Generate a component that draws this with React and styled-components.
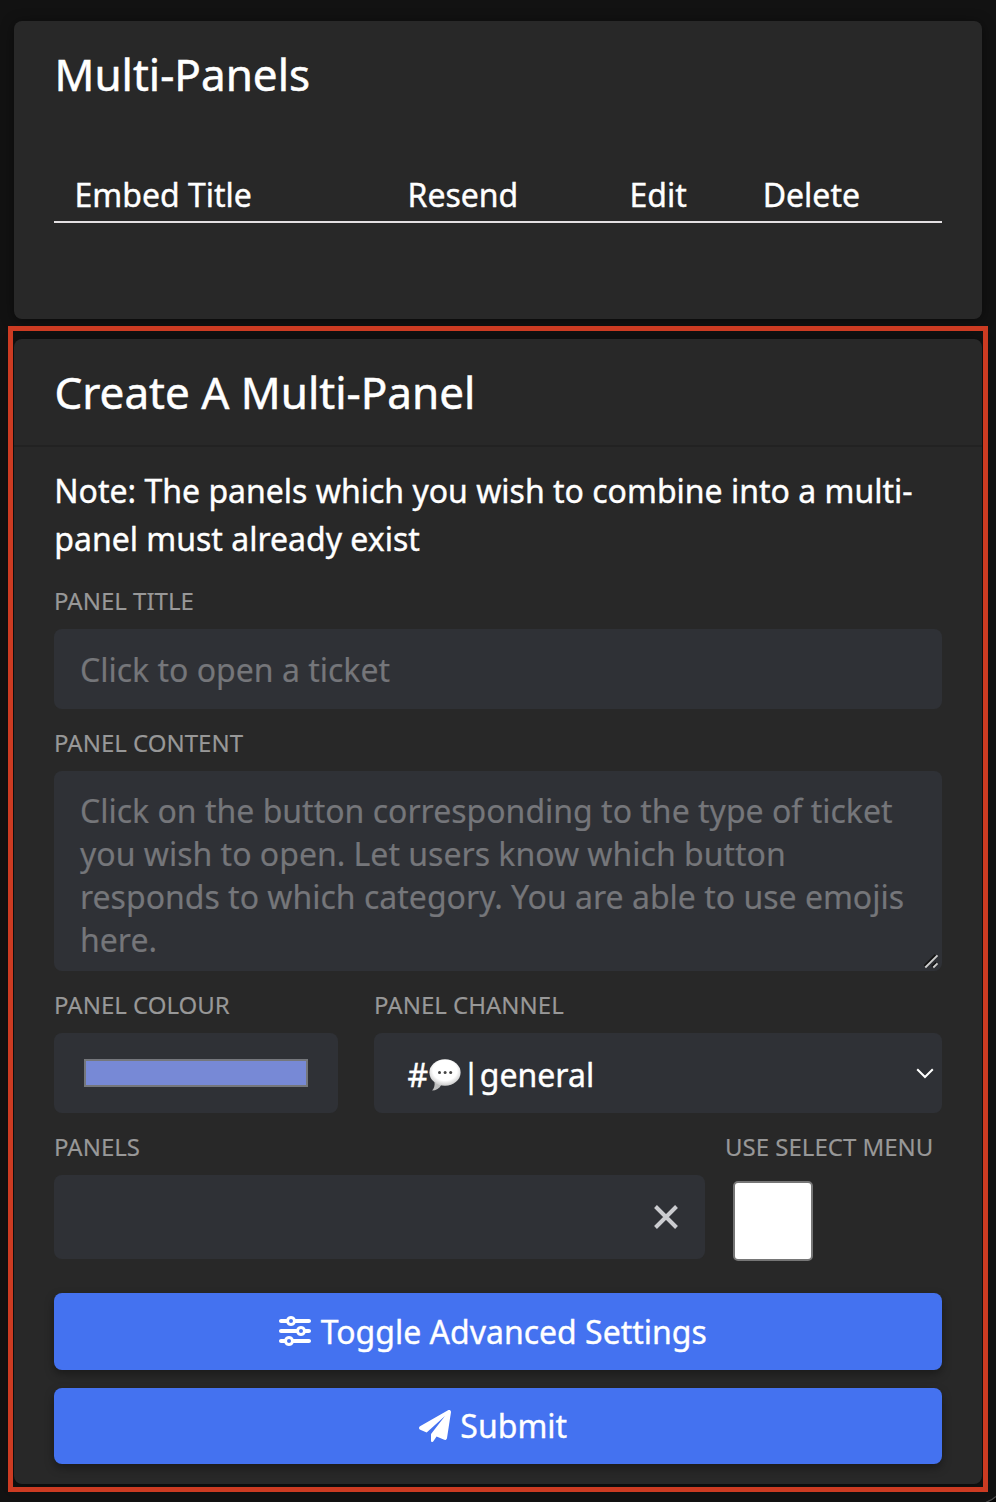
import React from "react";
import styled, { createGlobalStyle } from "styled-components";
import { FaSliders } from "react-icons/fa6";

const GlobalStyle = createGlobalStyle`
  *, *::before, *::after { box-sizing: border-box; }
  html, body { margin: 0; padding: 0; background: #121212; }
  body {
    font-family: "Noto Sans", "Open Sans", sans-serif;
    font-size: 32px;
    color: #fff;
    overflow: hidden;
  }
`;

const Page = styled.main`
  position: relative;
  isolation: isolate;
  width: 996px;
  height: 1502px;
  padding: 21px 8px 10px;
  display: flex;
  flex-direction: column;
  gap: 7px;
  overflow: hidden;
`;

const WindowCorner = styled.svg`
  position: absolute;
  right: 0;
  bottom: 0;
`;

const Card = styled.section`
  position: relative;
  z-index: -1;
  display: flex;
  flex-direction: column;
  background: #282828;
  border-radius: 8px;
  box-shadow: 0 2px 14px rgba(0, 0, 0, 0.45);
`;

const ListCard = styled(Card)`
  height: 298px;
  margin: 0 6px;
`;

const FormCard = styled(Card)`
  height: 1145px;
`;

const Highlight = styled.div`
  border: 5px solid #cc3b22;
  padding: 8px 1px 3px;
`;

const CardHeader = styled.header`
  height: 108px;
  flex: none;
  display: flex;
  align-items: center;
  padding: 0 40px 0 40.5px;
  border-bottom: 2px solid ${(p) => (p.$divided ? "#222222" : "transparent")};
`;

const CardTitle = styled.h4`
  margin: 0;
  font-size: 44px;
  line-height: 60px;
  font-weight: 400;
  -webkit-text-stroke: 0.5px currentColor;
`;

const TableHead = styled.div`
  display: grid;
  grid-template-columns: 37.5% 25% 15% 22.5%;
  margin: 41px 40px 0;
  height: 53px;
  border-bottom: 2px solid #e4e0e2;
`;

const HeadCell = styled.div`
  padding-left: 20.5px;
  line-height: 49px;
  -webkit-text-stroke: 0.4px currentColor;
`;

const Form = styled.form`
  display: flex;
  flex-direction: column;
  padding: 20px 40px 0;
`;

const Note = styled.p`
  margin: 0 0 4px;
  padding-left: 0.3px;
  line-height: 48px;
  -webkit-text-stroke: 0.4px currentColor;
`;

const Row = styled.div`
  display: flex;
  gap: ${(p) => p.$gap}px;
`;

const Field = styled.div`
  display: flex;
  flex-direction: column;
  width: ${(p) => (p.$width ? `${p.$width}px` : "100%")};
  flex: none;
`;

const Label = styled.label`
  height: 62px;
  padding-top: 16px;
  font-size: 24px;
  line-height: 36px;
  color: #989898;
  text-transform: uppercase;
  white-space: nowrap;
  -webkit-text-stroke: 0.15px currentColor;
`;

const Control = styled.div`
  height: ${(p) => p.$height || 80}px;
  background: #2f3136;
  border-radius: 8px;
  display: flex;
  align-items: center;
`;

const TextInput = styled.input`
  height: 80px;
  padding: 0 26px;
  border: 0;
  border-radius: 8px;
  background: #2f3136;
  color: #fff;
  font: inherit;
  -webkit-text-stroke: 0.2px currentColor;
  &::placeholder { color: #75767a; opacity: 1; }
`;

const AreaWrap = styled.div`
  position: relative;
  display: flex;
`;

const TextArea = styled.textarea`
  width: 100%;
  height: 200px;
  padding: 18px 26px;
  border: 0;
  border-radius: 8px;
  background: #2f3136;
  color: #fff;
  font: inherit;
  line-height: 43px;
  resize: none;
  overflow: hidden;
  -webkit-text-stroke: 0.2px currentColor;
  &::placeholder { color: #75767a; opacity: 1; }
`;

const Grip = styled.svg`
  position: absolute;
  right: 2px;
  bottom: 1px;
`;

const Swatch = styled.div`
  width: 224px;
  height: 28px;
  margin-left: 30px;
  background: #7789d6;
  border: 2px solid #75777c;
`;

const SelectBox = styled(Control)`
  padding: 3px 8px 0 33.5px;
  justify-content: space-between;
`;

const SelectValue = styled.span`
  display: flex;
  align-items: center;
  line-height: 48px;
  -webkit-text-stroke: 0.4px currentColor;
  svg { stroke: none; }
`;

const Chevron = styled.svg`
  margin-bottom: 2px;
`;

const TagBox = styled(Control)`
  justify-content: flex-end;
  padding-right: 27px;
`;

const CheckBox = styled.div`
  width: 80px;
  height: 80px;
  margin: 6px 0 0 8px;
  background: #fff;
  border: 2px solid #767676;
  border-radius: 5px;
`;

const Button = styled.button`
  height: ${(p) => p.$height}px;
  margin-top: ${(p) => p.$top}px;
  display: flex;
  align-items: center;
  justify-content: center;
  gap: 9.5px;
  padding: 0 10px 0 0;
  border: 0;
  border-radius: 8px;
  background: #4472f0;
  color: #fff;
  font: inherit;
  line-height: 48px;
  box-shadow: 0 4px 10px rgba(0, 0, 0, 0.35);
  -webkit-text-stroke: 0.35px currentColor;
  svg { stroke: none; flex: none; margin-bottom: ${(p) => p.$lift || 0}px; }
`;

const PaperPlane = () => (
  <svg width="32" height="32" viewBox="0 0 512 512" fill="currentColor" aria-hidden="true">
    <path d="M511.6 36.86l-64 415.1c-1.5 9.734-7.375 18.22-15.97 23.05c-4.844 2.719-10.27 4.097-15.68 4.097c-4.188 0-8.319-.8154-12.29-2.472l-122.6-51.1l-50.86 76.29C226.3 508.5 219.8 512 212.8 512C201.3 512 192 502.7 192 491.2v-96.18c0-7.115 2.372-14.03 6.742-19.64L416 96l-293.7 264.3L19.69 317.5C8.438 312.8 .8125 302.2 .0625 289.1s5.469-23.72 16.06-29.99l448-255.1c10.69-6.109 23.88-5.547 34 1.406S513.5 24.72 511.6 36.86z" />
  </svg>
);

const SpeechBalloon = () => (
  <svg width="34" height="36" viewBox="0 0 34 36" role="img" aria-label="speech balloon">
    <defs>
      <radialGradient id="balloon" cx="50%" cy="42%" r="55%">
        <stop offset="0.7" stopColor="#ffffff" />
        <stop offset="1" stopColor="#d2d2d2" />
      </radialGradient>
    </defs>
    <path d="M6.5 25 C7 29 6 31.5 4 33.6 C8 33.6 11.5 31.5 13.5 27.5Z" fill="#bdbdbd" />
    <ellipse cx="17" cy="15.5" rx="15.6" ry="13.2" fill="url(#balloon)" />
    <circle cx="11.5" cy="15.5" r="1.5" fill="#444" />
    <circle cx="17.1" cy="15.5" r="1.5" fill="#444" />
    <circle cx="22.7" cy="15.5" r="1.5" fill="#444" />
  </svg>
);

const columns = ["Embed Title", "Resend", "Edit", "Delete"];

export default function App() {
  return (
    <>
      <GlobalStyle />
      <Page>
        <ListCard>
          <CardHeader>
            <CardTitle>Multi-Panels</CardTitle>
          </CardHeader>
          <TableHead>
            {columns.map((name) => (
              <HeadCell key={name}>{name}</HeadCell>
            ))}
          </TableHead>
        </ListCard>

        <Highlight>
          <FormCard>
            <CardHeader $divided>
              <CardTitle>Create A Multi-Panel</CardTitle>
            </CardHeader>
            <Form onSubmit={(e) => e.preventDefault()}>
              <Note>
                Note: The panels which you wish to combine into a multi-panel must already exist
              </Note>
              <Field>
                <Label htmlFor="title">Panel Title</Label>
                <TextInput id="title" placeholder="Click to open a ticket" />
              </Field>
              <Field>
                <Label htmlFor="content">Panel Content</Label>
                <AreaWrap>
                  <TextArea
                    id="content"
                    placeholder="Click on the button corresponding to the type of ticket you wish to open. Let users know which button responds to which category. You are able to use emojis here."
                  />
                  <Grip width="16" height="16" viewBox="0 0 16 16" fill="none">
                    <path d="M0.5 12 L11.5 1 M8 12.7 L12.2 8.5" stroke="#111" strokeWidth="2" />
                    <path d="M1.3 13.5 L13.5 1.3 M9.3 13.5 L13.5 9.3" stroke="#cccccc" strokeWidth="1.9" />
                  </Grip>
                </AreaWrap>
              </Field>
              <Row $gap={36}>
                <Field $width={284}>
                  <Label>Panel Colour</Label>
                  <Control>
                    <Swatch />
                  </Control>
                </Field>
                <Field $width={568}>
                  <Label>Panel Channel</Label>
                  <SelectBox>
                    <SelectValue>
                      #<SpeechBalloon />|general
                    </SelectValue>
                    <Chevron width="18" height="12" viewBox="0 0 18 12" fill="none">
                      <path d="M1.2 1.2 L9 9 L16.8 1.2" stroke="#fff" strokeWidth="2" />
                    </Chevron>
                  </SelectBox>
                </Field>
              </Row>
              <Row $gap={20}>
                <Field $width={651}>
                  <Label>Panels</Label>
                  <TagBox $height={84}>
                    <svg width="24" height="24" viewBox="0 0 24 24" fill="none">
                      <path d="M1.5 1.5 L22.5 22.5 M22.5 1.5 L1.5 22.5" stroke="#cbccd0" strokeWidth="4" />
                    </svg>
                  </TagBox>
                </Field>
                <Field $width={217}>
                  <Label>Use Select Menu</Label>
                  <CheckBox role="checkbox" aria-checked="false" />
                </Field>
              </Row>
              <Button type="button" $height={77} $top={32} $lift={2}>
                <FaSliders size={32} />
                Toggle Advanced Settings
              </Button>
              <Button type="submit" $height={76} $top={18}>
                <PaperPlane />
                Submit
              </Button>
            </Form>
          </FormCard>
        </Highlight>
        <WindowCorner width="12" height="8" viewBox="0 0 12 8" fill="none">
          <path d="M12 3 Q8.5 6.5 3 8.5 H12Z" fill="#050505" />
          <path d="M12 2.5 Q8.5 6 2 8.2" stroke="#4a4a4a" strokeWidth="1.2" />
        </WindowCorner>
      </Page>
    </>
  );
}
